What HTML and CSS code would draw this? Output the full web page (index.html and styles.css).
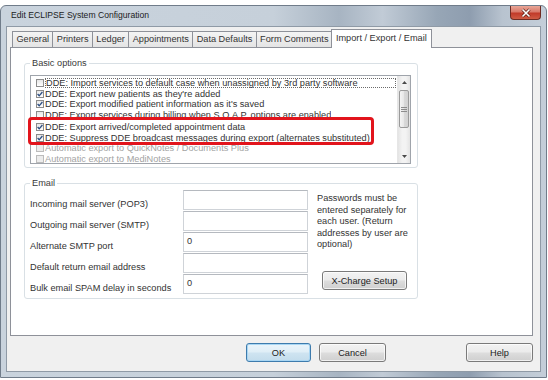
FILE: index.html
```html
<!DOCTYPE html>
<html>
<head>
<meta charset="utf-8">
<title>Edit ECLIPSE System Configuration</title>
<link rel="stylesheet" href="styles.css">
</head>
<body>
<div class="window">
  <div class="titlebar">
    <span class="title">Edit ECLIPSE System Configuration</span>
    <span class="close"><svg width="14" height="10" viewBox="0 0 14 10"><path d="M3.5 1.5 L10.5 8.5 M10.5 1.5 L3.5 8.5" stroke="#5a1a12" stroke-width="3"/><path d="M3.5 1.5 L10.5 8.5 M10.5 1.5 L3.5 8.5" stroke="#ffffff" stroke-width="1.6"/></svg></span>
  </div>
  <div class="client">
    <div class="tabs">
      <div class="tab">General</div>
      <div class="tab">Printers</div>
      <div class="tab">Ledger</div>
      <div class="tab">Appointments</div>
      <div class="tab">Data Defaults</div>
      <div class="tab">Form Comments</div>
      <div class="tab active">Import / Export / Email</div>
    </div>
    <div class="panel">
      <fieldset class="group basic">
        <legend>Basic options</legend>
        <div class="listbox">
          <div class="items">
            <div class="item"><span class="cb"></span><span class="txt focus">DDE: Import services to default case when unassigned by 3rd party software</span></div>
            <div class="item"><span class="cb"><svg width="6" height="6" viewBox="0 0 6 6"><path d="M0.6 3 L2.2 4.8 L5.4 1" stroke="#2b4d80" stroke-width="1.3" fill="none"/></svg></span><span class="txt">DDE: Export new patients as they're added</span></div>
            <div class="item"><span class="cb"><svg width="6" height="6" viewBox="0 0 6 6"><path d="M0.6 3 L2.2 4.8 L5.4 1" stroke="#2b4d80" stroke-width="1.3" fill="none"/></svg></span><span class="txt">DDE: Export modified patient information as it's saved</span></div>
            <div class="item cutrow"><div class="cut"><span class="cb"></span><span class="txt">DDE: Export services during billing when S.O.A.P. options are enabled</span></div></div>
            <div class="item"><span class="cb"><svg width="6" height="6" viewBox="0 0 6 6"><path d="M0.6 3 L2.2 4.8 L5.4 1" stroke="#2b4d80" stroke-width="1.3" fill="none"/></svg></span><span class="txt">DDE: Export arrived/completed appointment data</span></div>
            <div class="item"><span class="cb"><svg width="6" height="6" viewBox="0 0 6 6"><path d="M0.6 3 L2.2 4.8 L5.4 1" stroke="#2b4d80" stroke-width="1.3" fill="none"/></svg></span><span class="txt">DDE: Suppress DDE broadcast messages during export (alternates substituted)</span></div>
            <div class="item disabled"><span class="cb"></span><span class="txt">Automatic export to QuickNotes / Documents Plus</span></div>
            <div class="item disabled"><span class="cb"></span><span class="txt">Automatic export to MediNotes</span></div>
          </div>
          <div class="scrollbar">
            <div class="sb-btn"><svg width="5" height="3" viewBox="0 0 5 3"><path d="M0 3 L2.5 0 L5 3 Z" fill="#4a4a4a"/></svg></div>
            <div class="sb-track"><div class="sb-thumb"><span class="grip"></span></div></div>
            <div class="sb-btn"><svg width="5" height="3" viewBox="0 0 5 3"><path d="M0 0 L2.5 3 L5 0 Z" fill="#4a4a4a"/></svg></div>
          </div>
          <div class="highlight"></div>
        </div>
      </fieldset>
      <fieldset class="group email">
        <legend>Email</legend>
        <div class="email-grid">
          <label class="lbl r1">Incoming mail server (POP3)</label>
          <div class="input r1"></div>
          <label class="lbl r2">Outgoing mail server (SMTP)</label>
          <div class="input r2"></div>
          <label class="lbl r3">Alternate SMTP port</label>
          <div class="input r3">0</div>
          <label class="lbl r4">Default return email address</label>
          <div class="input r4"></div>
          <label class="lbl r5">Bulk email SPAM delay in seconds</label>
          <div class="input r5">0</div>
          <div class="note">
            <p>Passwords must be<br>entered separately for<br>each user. (Return<br>addresses by user are<br>optional)</p>
            <button class="btn xcharge">X-Charge Setup</button>
          </div>
        </div>
      </fieldset>
    </div>
    <div class="buttons">
      <button class="btn ok">OK</button>
      <button class="btn cancel">Cancel</button>
      <button class="btn help">Help</button>
    </div>
  </div>
</div>
</body>
</html>
```

FILE: styles.css
```css
* { box-sizing: border-box; }
html, body { margin: 0; padding: 0; background: #ffffff; }
body {
  font-family: "Liberation Sans", Arial, sans-serif;
  font-size: 9.2px;
  color: #333333;
}

.window {
  margin-top: 5px;
  width: 547px;
  height: 373px;
  border: 1px solid #707c8a;
  border-radius: 6px 6px 0 0;
  background:
    linear-gradient(90deg, #c9d3dd 0%, #c6d0da 50%, #a7b4c2 62%, #c1cbd6 70%, #97a6b6 80%, #8e9daf 86%, #b8c3cf 92%, #c4ced9 100%);
  padding: 0 5px 5px 5px;
  display: flex;
  flex-direction: column;
}

.titlebar {
  height: 20px;
  display: flex;
  justify-content: space-between;
  align-items: flex-start;
  padding-left: 5px;
}
.title {
  font-size: 8.6px;
  line-height: 19px;
  color: #1c1c1c;
}
.close {
  width: 31px;
  height: 14px;
  margin-right: 0;
  border: 1px solid #6e2b22;
  border-top: none;
  border-radius: 0 0 4px 4px;
  background: linear-gradient(#e9a697 0%, #d8796a 45%, #c13a29 55%, #cf5b44 100%);
  display: flex;
  align-items: center;
  justify-content: center;
}

.client {
  flex: 1;
  border: 1px solid #8f9aa6;
  background: #f0f0f0;
  padding: 2px 7px 0 3px;
  display: flex;
  flex-direction: column;
}

.tabs {
  height: 18px;
  display: flex;
  align-items: flex-end;
  padding-left: 2px;
}
.tab {
  height: 16px;
  padding: 0 3.4px;
  border: 1px solid #8e9199;
  border-bottom: none;
  margin-right: -1px;
  background: linear-gradient(#f4f4f4, #e4e4e4);
  line-height: 15px;
  white-space: nowrap;
  color: #333;
}
.tab.active {
  position: relative;
  z-index: 1;
  height: 19px;
  margin: 0 -2px -1px -1px;
  padding: 2px 4px 0 4px;
  line-height: 13px;
  background: #ffffff;
}

.panel {
  height: 289px;
  border: 1px solid #8e9199;
  background: #ffffff;
  padding: 9px 0 0 13px;
}

.group {
  width: 394px;
  margin: 0;
  border: 1px solid #d9e0e5;
  border-radius: 3px;
  padding: 6px 6px 3px 5px;
  min-width: 0;
}
.group legend {
  padding: 0 2px;
  line-height: 12px;
  color: #3a3a3a;
}
.email {
  margin-top: 9px;
  padding-top: 1px;
  padding-bottom: 3px;
}

.listbox {
  position: relative;
  height: 89px;
  border: 1px solid #9fa4ab;
  display: flex;
  background: #fff;
}
.items {
  flex: 1;
  overflow: hidden;
  padding: 2px 1px 0 5px;
}
.item {
  height: 10.6px;
  display: flex;
  align-items: center;
  white-space: nowrap;
  line-height: 10px;
}
.cb {
  flex: none;
  width: 8px;
  height: 8px;
  margin-right: 1px;
  border: 1px solid #8c8c8c;
  background: linear-gradient(#e6e6e6, #ffffff);
  display: flex;
  align-items: center;
  justify-content: center;
}
.txt.focus {
  flex: 1;
  height: 10px;
  line-height: 8px;
  border: 1px dotted #6a6a6a;
  padding-left: 0;
}
.item.cutrow {
  height: 12px;
  align-items: flex-start;
}
.cut {
  display: flex;
  align-items: center;
  height: 7px;
  overflow: hidden;
  padding-top: 3px;
}
.cut .txt { line-height: 10px; }
.item.disabled .txt { color: #a3a3a3; }
.item.disabled .cb {
  border-color: #bcbcbc;
  background: #ececec;
}

.scrollbar {
  flex: none;
  width: 13px;
  display: flex;
  flex-direction: column;
  border-left: 1px solid #e6e6e6;
  background: linear-gradient(90deg, #e4e4e4, #f3f3f3 35%, #f3f3f3 65%, #e4e4e4);
}
.sb-btn {
  height: 13px;
  display: flex;
  align-items: center;
  justify-content: center;
}
.sb-track { flex: 1; padding-top: 1px; }
.sb-thumb {
  margin: 0 1px;
  height: 38px;
  border: 1px solid #9a9a9a;
  border-radius: 2px;
  background: linear-gradient(90deg, #f4f4f4, #e6e6e6 50%, #d9d9d9 50%, #d2d2d2);
  display: flex;
  align-items: center;
  justify-content: center;
}
.grip {
  width: 6px;
  height: 5px;
  background: repeating-linear-gradient(#8c8c8c 0 1px, transparent 1px 2px);
}

.highlight {
  position: absolute;
  left: -3px;
  top: 41px;
  width: 346px;
  height: 28px;
  border: 3px solid #e2141c;
  border-radius: 4px;
  pointer-events: none;
}

.email-grid {
  display: grid;
  grid-template-columns: 153px 125px 1fr;
  grid-template-rows: repeat(5, 21px);
}
.lbl {
  grid-column: 1;
  align-self: end;
  padding-bottom: 1px;
  line-height: 12px;
  white-space: nowrap;
  color: #333;
}
.r1 { grid-row: 1; }
.r2 { grid-row: 2; }
.r3 { grid-row: 3; }
.r4 { grid-row: 4; }
.r5 { grid-row: 5; }
.input {
  grid-column: 2;
  height: 20px;
  border: 1px solid #cfd3d8;
  border-top-color: #b5b9bf;
  background: #fff;
  padding: 3px 3px 0 3px;
  line-height: 10px;
  color: #333;
}
.note {
  grid-column: 3;
  grid-row: 1 / 6;
  display: flex;
  flex-direction: column;
  padding-left: 9px;
}
.note p {
  margin: 3px 0 0 0;
  line-height: 11.5px;
  color: #333;
  white-space: nowrap;
}

.btn {
  font-family: "Liberation Sans", Arial, sans-serif;
  font-size: 9.2px;
  color: #222;
  height: 19px;
  padding: 0;
  border: 1px solid #7a7a7a;
  border-radius: 3px;
  background: linear-gradient(#f3f3f3 0%, #ebebeb 48%, #dddddd 52%, #cfcfcf 100%);
  box-shadow: inset 0 0 0 1px rgba(255,255,255,0.7);
}
.xcharge {
  margin-top: auto;
  margin-bottom: 5px;
  margin-left: 5px;
  width: 85px;
}

.buttons {
  display: flex;
  margin-top: 7px;
  padding-left: 236px;
}
.ok {
  width: 65px;
  border-color: #3d7bad;
  background: linear-gradient(#eaf4fa 0%, #dfeef7 48%, #cfe4f1 52%, #c3dcec 100%);
  box-shadow: inset 0 0 0 1px #a9d6f3;
}
.cancel { width: 67px; margin-left: 8px; }
.help { width: 67px; margin-left: auto; }
```
